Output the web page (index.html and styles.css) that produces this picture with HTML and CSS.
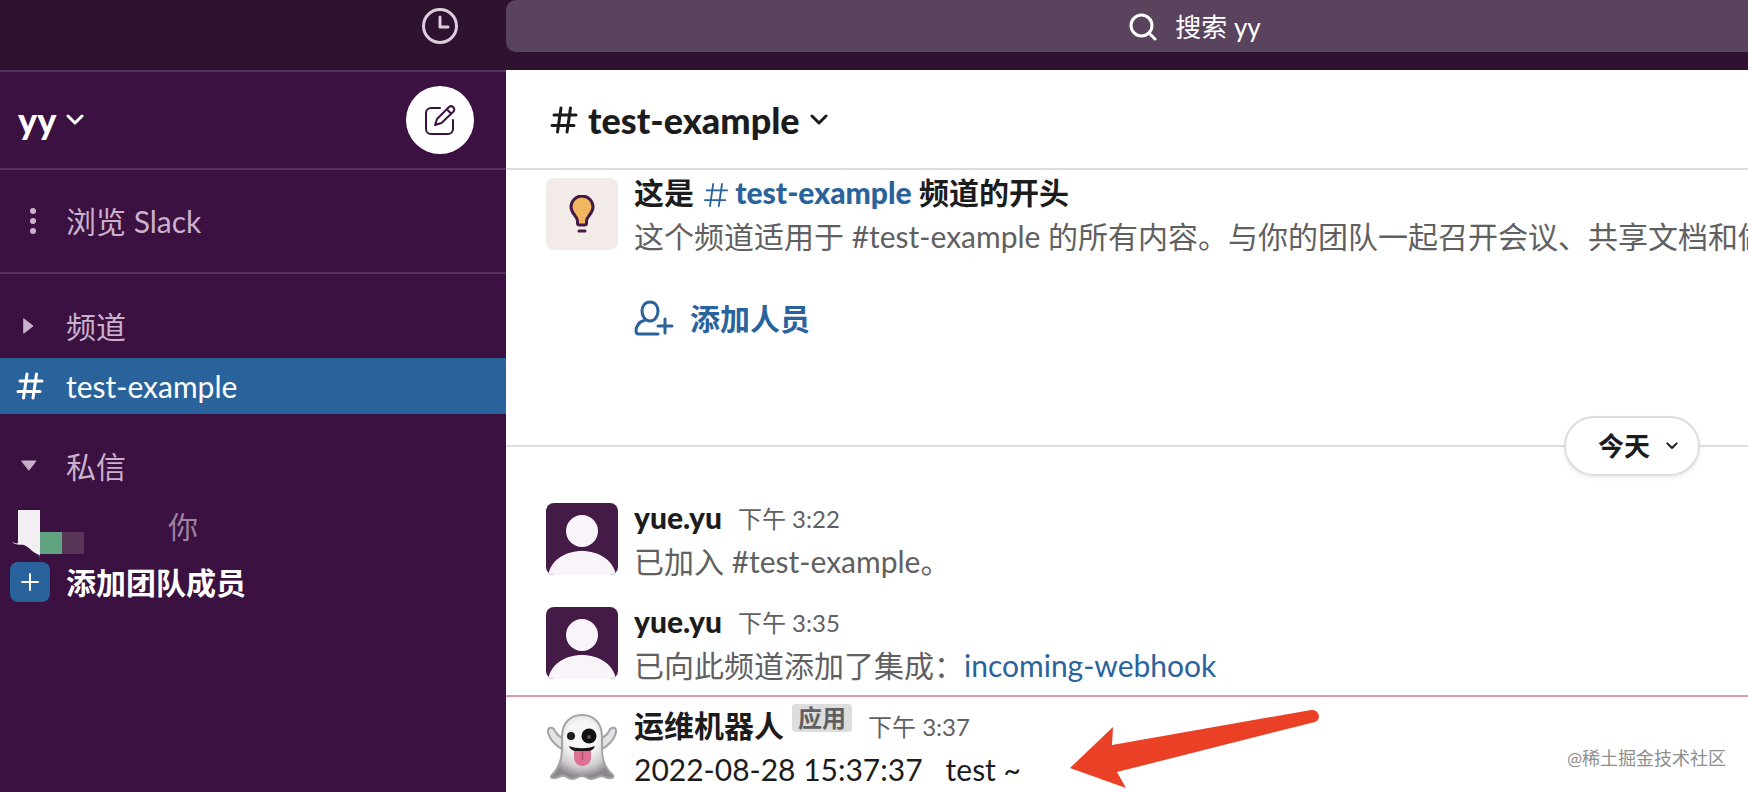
FILE: index.html
```html
<!DOCTYPE html>
<html lang="zh-CN">
<head>
    <meta charset="UTF-8">
    <meta name="viewport" content="width=device-width, initial-scale=1.0">
    <title>test-example | yy | Slack</title>
    <link rel="stylesheet" href="styles.css">
</head>
<body>

    <!-- Shared icons -->
    <svg class="sprite" aria-hidden="true">
        <symbol id="icon-hash" viewBox="0 0 28 28">
            <path d="M4 9h22M2 19.500h22M11 2L7.500 26M20.500 2L17 26"/>
        </symbol>
        <symbol id="icon-chevron" viewBox="0 0 18 12">
            <path d="M2 2l7 7 7-7"/>
        </symbol>
        <symbol id="icon-person" viewBox="0 0 72 72">
            <rect width="72" height="72" fill="#441a46"/>
            <circle cx="36" cy="28" r="16" fill="#f8f4f9"/>
            <path d="M2 72C5 57 19 48 36 48s31 9 34 24z" fill="#f8f4f9"/>
        </symbol>
    </svg>

    <header class="topbar">
        <div class="history">
            <button type="button" class="history-btn" aria-label="历史记录">
                <svg class="icon-clock" viewBox="0 0 36 36"><circle cx="18" cy="18" r="16.500"/><path d="M18 9v10h8"/></svg>
            </button>
        </div>
        <button type="button" class="search">
            <svg class="icon-search" viewBox="0 0 28 28"><circle cx="12.500" cy="12.500" r="10.500"/><path d="M20.500 20.500l5.500 5.500"/></svg>
            <span>搜索 yy</span>
        </button>
    </header>

    <div class="layout">
        <!-- Sidebar -->
        <nav class="sidebar">
            <div class="workspace">
                <button type="button" class="workspace-name">yy
                    <svg class="icon-chevron"><use href="#icon-chevron"/></svg>
                </button>
                <button type="button" class="compose" aria-label="新消息">
                    <svg class="icon-compose" viewBox="0 0 32 32">
                        <path d="M16 4H7a5 5 0 0 0-5 5v16a5 5 0 0 0 5 5h17a5 5 0 0 0 5-5v-9"/>
                        <path d="M11 21l2-6L25 3a3.200 3.200 0 0 1 4.500 4.500L17.500 19zM23 5.500l4 4"/>
                    </svg>
                </button>
            </div>

            <div class="browse">
                <a href="#" class="side-row">
                    <span class="side-icon"><svg class="icon-dots" viewBox="0 0 6 26"><circle cx="3" cy="3" r="3"/><circle cx="3" cy="13" r="3"/><circle cx="3" cy="23" r="3"/></svg></span>
                    浏览 Slack
                </a>
            </div>

            <div class="side-group">
                <a href="#" class="side-row heading">
                    <span class="side-icon caret"><svg class="icon-right" viewBox="0 0 12 16"><path d="M1 1l9 7-9 7z"/></svg></span>
                    频道
                </a>
                <a href="#" class="side-row active">
                    <span class="side-icon"><svg class="icon-hash"><use href="#icon-hash"/></svg></span>
                    test-example
                </a>
            </div>

            <div class="side-group">
                <a href="#" class="side-row heading">
                    <span class="side-icon caret"><svg class="icon-down" viewBox="0 0 16 12"><path d="M1 1h14l-7 9z"/></svg></span>
                    私信
                </a>
                <a href="#" class="side-row self">
                    <svg class="self-pic" viewBox="0 0 74 48" aria-hidden="true">
                        <path d="M22 40h6v8z" fill="#2a639c"/>
                        <path d="M6 0h22v45c-6-1-11-8-16-10-4-1-8 1-12-3 3 1 4 2 6 1z" fill="#f2eff2"/>
                        <path d="M28 22h22v22H28z" fill="#60a380"/>
                        <path d="M50 22h22v22H50z" fill="#593558"/>
                    </svg>
                    你
                </a>
                <a href="#" class="side-row invite">
                    <span class="plus"><svg class="icon-plus" viewBox="0 0 18 18"><path d="M9 1v16M1 9h16"/></svg></span>
                    添加团队成员
                </a>
            </div>
        </nav>

        <!-- Channel -->
        <main class="channel">
            <header class="channel-header">
                <button type="button" class="channel-title">
                    <svg class="icon-hash"><use href="#icon-hash"/></svg>
                    <span>test-example</span>
                    <svg class="icon-chevron"><use href="#icon-chevron"/></svg>
                </button>
            </header>

            <section class="intro">
                <div class="tile">
                    <svg class="icon-bulb" viewBox="0 0 26 38">
                        <path d="M8.500 26c0-5-6.500-7-6.500-14a11 11 0 0 1 22 0c0 7-6.500 9-6.500 14v2a2 2 0 0 1-2 2h-5a2 2 0 0 1-2-2z" fill="#f0b660"/>
                        <path d="M10 36h6"/>
                    </svg>
                </div>
                <div class="intro-body">
                    <h2>这是 <a href="#"><svg class="icon-hash"><use href="#icon-hash"/></svg>test-example</a> 频道的开头</h2>
                    <p>这个频道适用于 #test-example 的所有内容。与你的团队一起召开会议、共享文档和做出决定。</p>
                    <a href="#" class="add-people">
                        <svg class="icon-add" viewBox="0 0 40 36">
                            <path d="M16 2c5 0 8 4 8 9s-3 10-8 10-8-5-8-10 3-9 8-9zM11 20C5 22 2 26 2 31c0 2 1 3 3 3h19M31 19v14M24 26h14"/>
                        </svg>
                        添加人员
                    </a>
                </div>
            </section>

            <div class="day">
                <button type="button" class="day-btn">今天
                    <svg class="icon-chevron"><use href="#icon-chevron"/></svg>
                </button>
            </div>

            <article class="message">
                <svg class="avatar" role="img" aria-label="yue.yu"><use href="#icon-person"/></svg>
                <div class="message-body">
                    <div class="meta"><strong>yue.yu</strong><time>下午 3:22</time></div>
                    <p class="system">已加入 #test-example。</p>
                </div>
            </article>

            <article class="message">
                <svg class="avatar" role="img" aria-label="yue.yu"><use href="#icon-person"/></svg>
                <div class="message-body">
                    <div class="meta"><strong>yue.yu</strong><time>下午 3:35</time></div>
                    <p class="system">已向此频道添加了集成：<a href="#">incoming-webhook</a></p>
                </div>
            </article>

            <hr class="unread">

            <article class="message">
                <svg class="avatar" viewBox="0 0 72 72" role="img" aria-label="运维机器人">
                    <defs>
                        <radialGradient id="ghost" cx="50%" cy="35%" r="62%">
                            <stop offset="0.400" stop-color="#f7f6f7"/>
                            <stop offset="0.750" stop-color="#cfcdd0"/>
                            <stop offset="1" stop-color="#8b888d"/>
                        </radialGradient>
                    </defs>
                    <path d="M20 39C12 38 3 28 2 21c-1-5 5-6 7-1 2 4 6 7 11 8zM52 39c8-1 17-11 18-18 1-5-5-6-7-1-2 4-6 7-11 8z" fill="#e3e2e4" stroke="#a5a2a7" stroke-width="2"/>
                    <path d="M16 26C16 12 24 4 36 4s20 8 20 22v12c0 13 4 20 10 25 4 3-1 6-7 3-5-3-9 2-14 2-4 0-5-3-9-3s-6 3-10 3c-5 0-6-5-11-3-6 3-13 3-9-1 7-7 10-15 10-26z" fill="url(#ghost)" stroke="#a5a2a7" stroke-width="2"/>
                    <circle cx="25" cy="25" r="4" fill="#1c1b1d"/>
                    <circle cx="43" cy="25" r="7.500" fill="#111"/>
                    <circle cx="43" cy="26" r="2" fill="#55525a"/>
                    <path d="M28 38h17v8c0 12-17 12-17 0z" fill="#dd7191"/>
                    <path d="M36.500 40v8" stroke="#b94a6d" stroke-width="1.500"/>
                    <path d="M23 35c8 3 18 3 26 0-2 6-8 5-13 5s-11 1-13-5z" fill="#161416"/>
                </svg>
                <div class="message-body">
                    <div class="meta"><strong class="bot">运维机器人</strong><span class="badge">应用</span><time>下午 3:37</time></div>
                    <p class="text">2022-08-28 15:37:37 &nbsp; test ~</p>
                </div>
            </article>
        </main>
    </div>

    <!-- Annotation and watermark over the page -->
    <svg class="arrow" viewBox="0 0 250 82" aria-hidden="true">
        <path d="M0 60L43 19l-1 18L241 2c8-1 11 9 4 12L47 64l9 16z" fill="#ea4126"/>
    </svg>
    <span class="watermark">@稀土掘金技术社区</span>

</body>
</html>
```
FILE: styles.css
```css
* {
    box-sizing: border-box;
}

body {
    font-family: Lato, 'Noto Sans CJK SC', sans-serif;
    font-size: 30px;
    line-height: 44px;
    margin: 0;
    height: 100vh;
    display: flex;
    flex-direction: column;
    position: relative;
    overflow: hidden;
    background: #fff;
    color: #1d1c1d;
}

a {
    color: #2a639c;
    text-decoration: none;
}

button {
    font: inherit;
    color: inherit;
    background: none;
    border: none;
    padding: 0;
    cursor: pointer;
}

h2,
p {
    font-size: 30px;
    margin: 0;
}

svg {
    flex-shrink: 0;
    fill: none;
    stroke: currentColor;
    stroke-width: 3;
    stroke-linecap: round;
    stroke-linejoin: round;
}

.sprite {
    position: absolute;
    width: 0;
    height: 0;
}

.icon-hash {
    width: 28px;
    height: 28px;
}

.icon-chevron {
    width: 18px;
    height: 12px;
}

/* Top bar */
.topbar {
    display: flex;
    flex-shrink: 0;
    height: 70px;
    background: #2e122f;
}

.history {
    width: 506px;
    flex-shrink: 0;
    display: flex;
    justify-content: flex-end;
    align-items: flex-start;
    padding: 8px 48px;
}

.history-btn {
    display: flex;
    color: #ddcddd;
}

.icon-clock {
    width: 36px;
    height: 36px;
}

.search {
    flex: 1;
    height: 52px;
    display: flex;
    align-items: center;
    justify-content: center;
    gap: 18px;
    padding: 2px 0 0 136px;
    background: #5a435c;
    border-radius: 10px 0 0 10px;
    color: #fff;
    font-size: 26px;
}

.icon-search {
    width: 28px;
    height: 28px;
}

.layout {
    flex: 1;
    min-height: 0;
    display: flex;
}

/* Sidebar */
.sidebar {
    width: 506px;
    flex-shrink: 0;
    background: #3a1140;
    color: #cbb0cc;
    border-top: 2px solid #55345a;
}

.workspace {
    display: flex;
    align-items: center;
    justify-content: space-between;
    height: 98px;
    padding: 0 32px 0 18px;
    border-bottom: 2px solid #55345a;
}

.workspace-name {
    display: flex;
    align-items: center;
    gap: 10px;
    font-size: 36px;
    font-weight: 900;
    color: #fff;
}

.compose {
    width: 68px;
    height: 68px;
    display: flex;
    align-items: center;
    justify-content: center;
    background: #fff;
    border-radius: 50%;
    color: #3a1140;
}

.icon-compose {
    width: 32px;
    height: 32px;
    stroke-width: 2;
}

.browse {
    padding: 23px 0;
    border-bottom: 2px solid #55345a;
}

.side-row {
    display: flex;
    align-items: center;
    height: 56px;
    padding-left: 16px;
    color: inherit;
}

.side-group {
    padding-top: 20px;
}

.heading {
    height: 64px;
}

.side-icon {
    width: 50px;
    display: flex;
    flex-shrink: 0;
}

.caret {
    padding-left: 5px;
}

.icon-dots {
    width: 6px;
    height: 26px;
    margin-left: 14px;
}

.icon-right {
    width: 12px;
    height: 16px;
    margin-left: 2px;
}

.icon-down {
    width: 16px;
    height: 12px;
}

.icon-right,
.icon-down {
    fill: currentColor;
    stroke-width: 1;
}

.icon-dots {
    fill: currentColor;
    stroke: none;
}

.active {
    background: #2a639c;
    color: #fff;
}

.self {
    padding-left: 12px;
    gap: 82px;
    color: #a082a2;
}

.self-pic {
    width: 74px;
    height: 48px;
    margin-top: 16px;
}

.self-pic,
.avatar,
.arrow {
    stroke: none;
}

.invite {
    padding-left: 10px;
    gap: 16px;
    color: #fff;
    font-weight: 700;
}

.plus {
    width: 40px;
    height: 40px;
    display: flex;
    align-items: center;
    justify-content: center;
    background: #2a639c;
    border-radius: 8px;
}

.icon-plus {
    width: 18px;
    height: 18px;
    stroke-width: 2;
}

/* Channel */
.channel {
    flex: 1;
    min-width: 0;
}

.channel-header {
    height: 100px;
    display: flex;
    align-items: center;
    padding: 2px 44px 0;
    border-bottom: 2px solid #dddddd;
}

.channel-title {
    display: flex;
    align-items: center;
    gap: 10px;
    font-size: 36px;
    font-weight: 900;
}

.intro {
    display: flex;
    gap: 16px;
    padding-left: 40px;
}

.tile {
    width: 72px;
    height: 72px;
    margin-top: 8px;
    flex-shrink: 0;
    display: flex;
    align-items: center;
    justify-content: center;
    background: #f2ebe7;
    border-radius: 8px;
    color: #441a46;
}

.icon-bulb {
    width: 26px;
    height: 38px;
}

.intro-body {
    min-width: 0;
    white-space: nowrap;
    overflow: hidden;
}

.intro-body h2 a {
    font-weight: 900;
}

.intro-body .icon-hash {
    width: 26px;
    height: 26px;
    margin: 0 6px 0 2px;
    vertical-align: -4px;
    stroke-width: 2;
}

.intro-body p,
.system {
    color: #616061;
}

.add-people {
    display: flex;
    align-items: center;
    gap: 16px;
    margin-top: 38px;
    font-weight: 700;
}

.icon-add {
    width: 40px;
    height: 36px;
}

.day {
    display: flex;
    align-items: center;
    margin: 76px 0 19px;
}

.day::before,
.day::after {
    content: '';
    flex: 1;
    height: 2px;
    background: #dddddd;
}

.day::after {
    flex: 0 0 48px;
}

.day-btn {
    display: flex;
    align-items: center;
    gap: 16px;
    height: 60px;
    padding: 0 20px 0 32px;
    border: 2px solid #dddddd;
    border-radius: 30px;
    font-size: 26px;
    font-weight: 700;
    box-shadow: 0 2px 4px rgba(0, 0, 0, 0.08);
}

.day-btn .icon-chevron {
    width: 12px;
    height: 8px;
}

.message {
    display: flex;
    gap: 16px;
    padding: 0 40px 16px;
}

.avatar {
    width: 72px;
    height: 72px;
    margin-top: 8px;
    border-radius: 8px;
}

.meta {
    display: flex;
    align-items: center;
    gap: 16px;
}

.meta strong {
    font-weight: 900;
}

.meta .bot {
    font-weight: 700;
}

.meta time {
    height: 40px;
    font-size: 24px;
    color: #616061;
}

.badge {
    margin: 0 0 14px -8px;
    padding: 0 6px;
    background: #dddddd;
    border-radius: 4px;
    color: #616061;
    font-size: 24px;
    font-weight: 700;
    line-height: 28px;
}

.text {
    color: #1d1c1d;
}

.unread {
    height: 2px;
    margin: -8px 0 6px;
    border: none;
    background: #da9ab4;
}

.arrow {
    position: absolute;
    left: 1070px;
    bottom: 2px;
    width: 250px;
    height: 82px;
}

.watermark {
    position: absolute;
    right: 22px;
    bottom: 22px;
    font-size: 18px;
    line-height: 24px;
    color: #8e8e8e;
}
```
